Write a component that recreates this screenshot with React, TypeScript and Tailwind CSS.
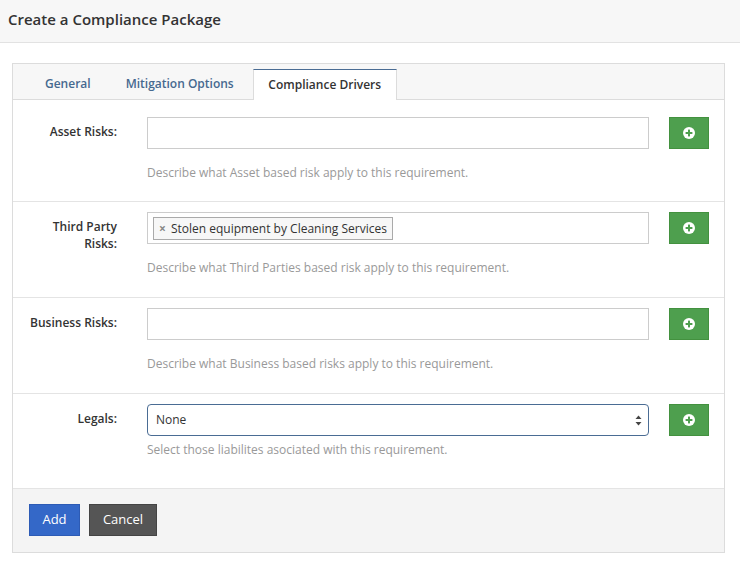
import React from "react";

const font = { fontFamily: '"Open Sans", "Liberation Sans", sans-serif' };

function PlusCircle() {
  return (
    <svg width="12" height="12" viewBox="0 0 12 12">
      <circle cx="6" cy="6" r="6" fill="#fff" />
      <rect x="5" y="2.6" width="2" height="6.8" fill="#4e9f4e" />
      <rect x="2.6" y="5" width="6.8" height="2" fill="#4e9f4e" />
    </svg>
  );
}

function AddBtn() {
  return (
    <button className="w-[40px] h-[32px] shrink-0 bg-[#4e9f4e] border border-[#43913f] flex items-center justify-center">
      <PlusCircle />
    </button>
  );
}

function Row({
  label,
  help,
  children,
  pt,
  mt,
  pb,
}: {
  label: React.ReactNode;
  help: string;
  children: React.ReactNode;
  pt: string;
  mt: string;
  pb: string;
}) {
  return (
    <div className={`flex border-b border-[#e4e4e4] ${pt} ${pb}`}>
      <div className="w-[92px] ml-[12px] shrink-0 text-right text-[12px] font-semibold text-[#333] leading-[17px] pt-[6px]">
        {label}
      </div>
      <div className="ml-[30px] w-[502px] shrink-0">
        {children}
        <div className={`${mt} text-[12px] leading-[17px] text-[#999]`}>{help}</div>
      </div>
      <div className="ml-[20px]">
        <AddBtn />
      </div>
    </div>
  );
}

export default function App() {
  return (
    <div className="w-[740px] h-[567px] bg-white" style={font}>
      <div className="h-[43px] bg-[#f7f7f7] border-b border-[#e2e2e2] flex items-center pl-[8px] pb-[3px]">
        <h1 className="text-[15px] font-semibold text-[#333]">Create a Compliance Package</h1>
      </div>
      <div className="mt-[20px] ml-[12px] w-[713px] border border-[#dcdcdc]">
        <div className="h-[36px] bg-[#f7f7f7] border-b border-[#dcdcdc] flex items-end pl-[16px] gap-[3px]">
          <div className="h-[30px] px-[16px] flex items-center text-[12px] font-semibold text-[#46698f]">General</div>
          <div className="h-[30px] px-[16px] flex items-center text-[12px] font-semibold text-[#46698f]">Mitigation Options</div>
          <div className="h-[31px] -mb-px w-[144px] justify-center bg-white border-x border-[#dcdcdc] border-t border-t-[#4a6c94] flex items-center text-[12px] font-semibold text-[#333]">
            Compliance Drivers
          </div>
        </div>
        <Row label="Asset Risks:" help="Describe what Asset based risk apply to this requirement." pt="pt-[17px]" mt="mt-[15px]" pb="pb-[20px]">
          <div className="h-[32px] border border-[#ccc] bg-white" />
        </Row>
        <Row
          label={<>Third Party<br />Risks:</>}
          help="Describe what Third Parties based risk apply to this requirement."
          pt="pt-[10px]"
          mt="mt-[15px]"
          pb="pb-[21px]"
        >
          <div className="h-[32px] border border-[#ccc] bg-white flex items-center pl-[5px] pt-[1px]">
            <span className="h-[23px] border border-[#aaa] bg-[#f7f7f7] flex items-center pl-[5px] pr-[5px] text-[12px] text-[#333]">
              <span className="text-[#888] text-[12px] mr-[5px] font-bold">×</span>
              Stolen equipment by Cleaning Services
            </span>
          </div>
        </Row>
        <Row label="Business Risks:" help="Describe what Business based risks apply to this requirement." pt="pt-[10px]" mt="mt-[15px]" pb="pb-[21px]">
          <div className="h-[32px] border border-[#ccc] bg-white" />
        </Row>
        <Row label="Legals:" help="Select those liabilites asociated with this requirement." pt="pt-[10px]" mt="mt-[5px]" pb="pb-[30px]">
          <div className="h-[32px] border border-[#4a6c94] rounded-[4px] bg-white flex items-center justify-between pl-[8px] pr-[6px] text-[12px] text-[#333]">
            <span>None</span>
            <svg width="7" height="11" viewBox="0 0 7 11">
              <path d="M3.5 0.5 L6.5 4 L0.5 4 Z" fill="#444" />
              <path d="M3.5 10.5 L6.5 7 L0.5 7 Z" fill="#444" />
            </svg>
          </div>
        </Row>
        <div className="h-[63px] bg-[#f4f4f4] flex items-center pl-[16px] gap-[9px] pb-[1px]">
          <button className="h-[32px] w-[51px] bg-[#3468c8] border border-[#2d5bb5] text-white text-[13px] font-medium">Add</button>
          <button className="h-[32px] w-[68px] bg-[#555] border border-[#444] text-white text-[13px] font-medium">Cancel</button>
        </div>
      </div>
    </div>
  );
}
